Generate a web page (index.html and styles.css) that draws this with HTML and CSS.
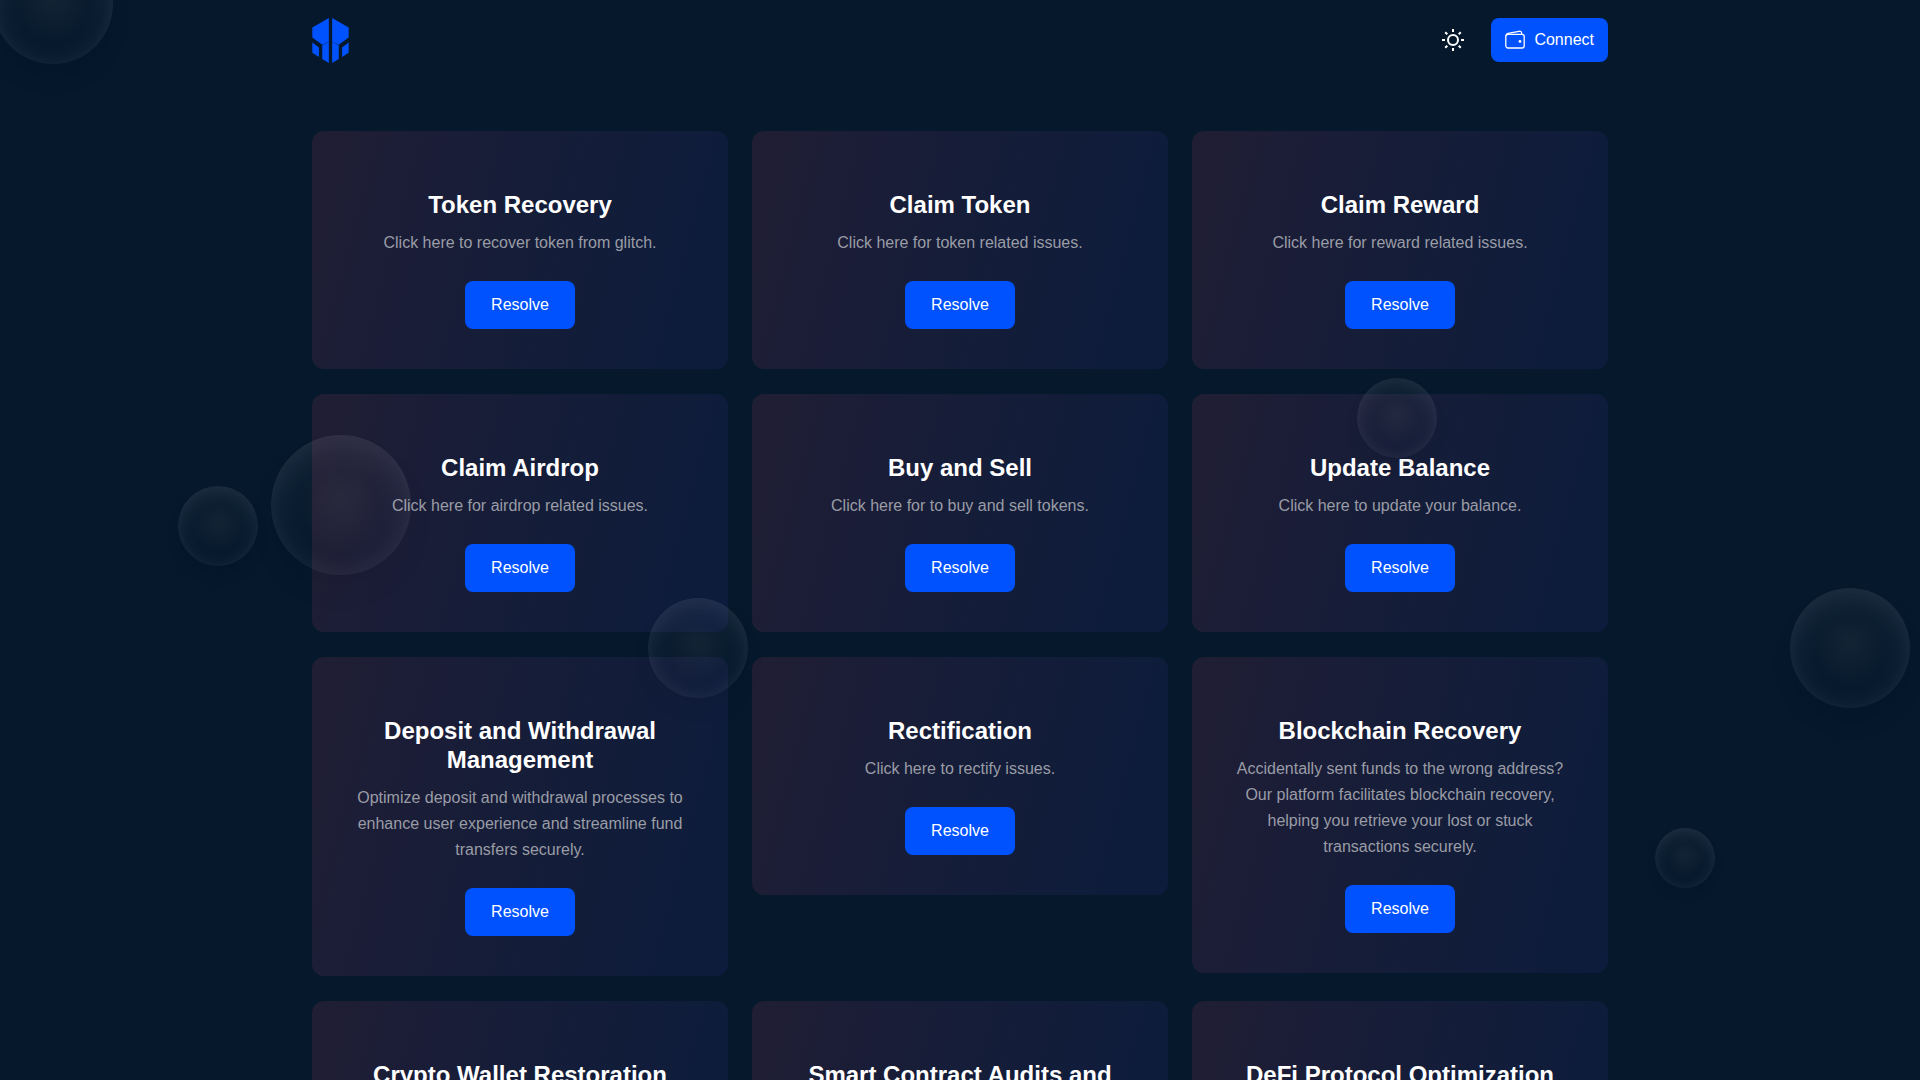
FILE: index.html
```html
<!DOCTYPE html>
<html lang="en">
<head>
<meta charset="utf-8">
<title>Resolve</title>
<link rel="stylesheet" href="styles.css">
</head>
<body>
<header class="header">
  <a class="logo" href="#" aria-label="Home">
    <svg width="37" height="45" viewBox="66 53 112 136" fill="currentColor"><path d="M117 53V125L97 134 67 112V82ZM127 53V125L147 134 177 112V82ZM97 135 117 125.500V189L97 177ZM147 135 127 125.500V189L147 177ZM67 127 87 142V171L67 158ZM177 127 157 142V171L177 158Z"/></svg>
  </a>
  <div class="actions">
    <button class="theme" type="button" aria-label="Toggle theme">
      <svg width="24" height="24" viewBox="0 0 24 24" fill="none" stroke="currentColor" stroke-width="2"><circle cx="12" cy="12" r="5"/><path d="M12 1v3M12 20v3M1 12h3M20 12h3M4.2 4.2l2.1 2.1M17.7 17.7l2.1 2.1M4.2 19.8l2.1-2.1M17.7 6.3l2.1-2.1"/></svg>
    </button>
    <button class="btn connect" type="button">
      <svg width="20" height="20" viewBox="0 0 20 20" fill="none" stroke="currentColor" stroke-width="1.3" stroke-linejoin="round"><rect x=".8" y="4.4" width="18.4" height="13.6" rx="2.2"/><path d="M1 6Q1 3.8 3 3.4L14 1.3Q16.400 1 16.600 3V4.400"/><circle cx="15" cy="11.400" r="1.400" fill="currentColor" stroke="none"/></svg>
      Connect
    </button>
  </div>
</header>

<main class="grid">
  <article class="card"><h2>Token Recovery</h2><p>Click here to recover token from glitch.</p><button class="btn" type="button">Resolve</button></article>
  <article class="card"><h2>Claim Token</h2><p>Click here for token related issues.</p><button class="btn" type="button">Resolve</button></article>
  <article class="card"><h2>Claim Reward</h2><p>Click here for reward related issues.</p><button class="btn" type="button">Resolve</button></article>
  <article class="card"><h2>Claim Airdrop</h2><p>Click here for airdrop related issues.</p><button class="btn" type="button">Resolve</button></article>
  <article class="card"><h2>Buy and Sell</h2><p>Click here for to buy and sell tokens.</p><button class="btn" type="button">Resolve</button></article>
  <article class="card"><h2>Update Balance</h2><p>Click here to update your balance.</p><button class="btn" type="button">Resolve</button></article>
  <article class="card"><h2>Deposit and Withdrawal Management</h2><p>Optimize deposit and withdrawal processes to enhance user experience and streamline fund transfers securely.</p><button class="btn" type="button">Resolve</button></article>
  <article class="card"><h2>Rectification</h2><p>Click here to rectify issues.</p><button class="btn" type="button">Resolve</button></article>
  <article class="card"><h2>Blockchain Recovery</h2><p>Accidentally sent funds to the wrong address? Our platform facilitates blockchain recovery, helping you retrieve your lost or stuck transactions securely.</p><button class="btn" type="button">Resolve</button></article>
  <article class="card"><h2>Crypto Wallet Restoration</h2><button class="btn" type="button">Resolve</button></article>
  <article class="card"><h2>Smart Contract Audits and</h2><button class="btn" type="button">Resolve</button></article>
  <article class="card"><h2>DeFi Protocol Optimization</h2><button class="btn" type="button">Resolve</button></article>
</main>

<div class="bubbles" aria-hidden="true">
  <span class="bubble b1"></span>
  <span class="bubble b2"></span>
  <span class="bubble b3"></span>
  <span class="bubble b4"></span>
  <span class="bubble b5"></span>
  <span class="bubble b6"></span>
  <span class="bubble b7"></span>
</div>
</body>
</html>
```
FILE: styles.css
```css
* { box-sizing: border-box; }
body {
  margin: 0;
  background: #05182c;
  color: #fff;
  font: 16px/26px "Liberation Sans", Arial, sans-serif;
}
.header, .grid {
  max-width: 1344px;
  margin: 0 auto;
  padding: 0 24px;
}
.header {
  display: flex;
  justify-content: space-between;
  align-items: flex-start;
  padding-top: 18px;
}
.logo { display: flex; color: #0052ff; }
.actions { display: flex; align-items: center; gap: 26px; }
.theme {
  display: flex;
  padding: 0;
  border: 0;
  background: none;
  color: #fff;
}
.btn {
  height: 48px;
  padding: 0 26px;
  border: 0;
  border-radius: 8px;
  background: #0052ff;
  color: #fff;
  font: inherit;
}
.connect {
  display: flex;
  align-items: center;
  gap: 9px;
  height: 44px;
  padding: 0 14px;
}
.grid {
  display: grid;
  grid-template-columns: repeat(auto-fit, minmax(360px, 1fr));
  align-items: start;
  gap: 25px 24px;
  margin-top: 68px;
  margin-bottom: 68px;
}
.card {
  padding: 59px 40px 40px;
  border-radius: 12px;
  background: linear-gradient(105deg, #201e33 0%, #1c1d37 20%, #151d38 50%, #0c1c3c 100%);
  text-align: center;
}
.card h2 {
  margin: 0 0 11px;
  font-size: 24px;
  line-height: 29px;
}
.card p { margin: 0 0 25px; color: #9a9ca6; }
.bubbles {
  position: absolute;
  inset: 0;
  overflow: hidden;
  pointer-events: none;
}
.bubble {
  --size: 120px;
  position: absolute;
  width: var(--size);
  height: var(--size);
  border-radius: 50%;
  background: radial-gradient(circle at 50% 45%, rgba(255, 255, 200, .05), transparent 60%);
  box-shadow:
    0 calc(var(--size) / 8) calc(var(--size) / 5) rgba(0, 0, 0, .05),
    inset 0 calc(var(--size) / 20) calc(var(--size) / 4) rgba(255, 255, 255, .12);
}
.b1 { left: -7px; top: -56px; }
.b2 { --size: 80px; left: 178px; top: 486px; }
.b3 { --size: 140px; left: 271px; top: 435px; }
.b4 { --size: 100px; left: 648px; top: 598px; }
.b5 { --size: 80px; left: 1357px; top: 378px; }
.b6 { left: 1790px; top: 588px; }
.b7 { --size: 60px; left: 1655px; top: 828px; }
```
